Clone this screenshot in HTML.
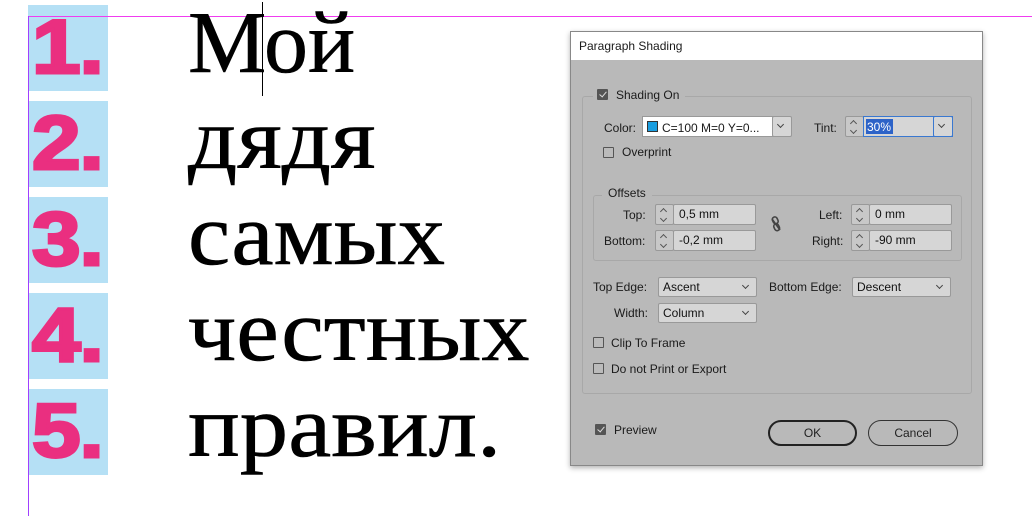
<!DOCTYPE html>
<html><head><meta charset="utf-8"><style>
*{margin:0;padding:0;box-sizing:border-box}
body{width:1032px;height:516px;background:#fff;position:relative;overflow:hidden;font-family:"Liberation Sans",sans-serif}
.a{position:absolute}
.bx{position:absolute;left:28px;width:80px;height:86px;background:#b5e0f5}
.num{position:absolute;left:32px;font:900 76px/1 "Liberation Sans",sans-serif;color:#ea2f80;letter-spacing:-1px;-webkit-text-stroke:3px #ea2f80;transform:scaleX(1.15);transform-origin:0 0}
.w{position:absolute;left:188px;font:88px/1 "Liberation Serif",serif;color:#000;white-space:nowrap;transform-origin:0 0;-webkit-text-stroke:0.6px #000}
.dlg{position:absolute;left:570px;top:31px;width:413px;height:435px;background:#b9b9b9;border:1px solid #888;box-shadow:0 2px 5px rgba(0,0,0,.3)}
.t{position:absolute;font-size:12px;color:#1a1a1a;white-space:nowrap}
.cb{position:absolute;width:11px;height:11px;border:1px solid #555;background:#bbb;border-radius:1px}
.cb.on{background:#555}
.cb.on::after{content:"";position:absolute;left:3px;top:0px;width:3px;height:6px;border:solid #ddd;border-width:0 1.5px 1.5px 0;transform:rotate(40deg)}
.fld{position:absolute;height:21px;background:#d6d6d6;border:1px solid #999;border-radius:2px;font-size:12px;padding:2px 5px;color:#111}
.sp{position:absolute;width:19px;height:21px;border:1px solid #999;background:#c8c8c8;border-radius:2px}
.sp::before{content:"";position:absolute;left:5px;top:4px;width:4px;height:4px;border:solid #555;border-width:1px 0 0 1px;transform:rotate(45deg)}
.sp::after{content:"";position:absolute;left:5px;top:11px;width:4px;height:4px;border:solid #555;border-width:0 1px 1px 0;transform:rotate(45deg)}
.dd{position:absolute;height:20px;background:#d6d6d6;border:1px solid #999;border-radius:2px;font-size:12px;padding:2px 4px;color:#111}
.dd::after{content:"";position:absolute;right:8px;top:5px;width:4px;height:4px;border:solid #444;border-width:0 1px 1px 0;transform:rotate(45deg)}
.grp{position:absolute;border:1px solid #a8a8a8;border-radius:3px}
.btn{position:absolute;height:26px;border-radius:13px;font-size:12px;text-align:center;line-height:22px;color:#222}
</style></head><body>
<div class="bx" style="top:5px"></div><div class="bx" style="top:101px"></div><div class="bx" style="top:197px"></div><div class="bx" style="top:293px"></div><div class="bx" style="top:389px"></div>
<div class="a" style="left:28px;top:16px;width:1004px;height:1px;background:#f03cf0"></div>
<div class="a" style="left:28px;top:16px;width:1px;height:500px;background:#a040ff"></div>
<div class="num" style="top:10px">1.</div>
<div class="num" style="top:106px">2.</div>
<div class="num" style="top:202px">3.</div>
<div class="num" style="top:298px">4.</div>
<div class="num" style="top:394px">5.</div>
<div class="w" style="top:0px">Мой</div>
<div class="w" style="top:96px;transform:scaleX(1.1)">дядя</div>
<div class="w" style="top:192px;transform:scaleX(1.08)">самых</div>
<div class="w" style="top:288px;transform:scaleX(1.09)">честных</div>
<div class="w" style="top:384px;transform:scaleX(1.1)">правил.</div>
<div class="a" style="left:262px;top:2px;width:1px;height:94px;background:#000"></div>

<div class="dlg">
<div class="a" style="left:0;top:0;width:411px;height:28px;background:#fff"></div>
<div class="t" style="left:8px;top:7px">Paragraph Shading</div>
<div class="grp" style="left:11px;top:64px;width:390px;height:298px"></div>
<div class="a" style="left:22px;top:56px;width:92px;height:16px;background:#b9b9b9"></div>
<div class="cb on" style="left:26px;top:57px"></div>
<div class="t" style="left:45px;top:56px">Shading On</div>
<div class="t" style="left:33px;top:89px">Color:</div>
<div class="a" style="left:71px;top:84px;width:133px;height:21px;background:#fff;border:1px solid #999"></div>
<div class="a" style="left:76px;top:89px;width:11px;height:11px;background:#1a9ee0;border:1px solid #333"></div>
<div class="t" style="left:91px;top:89px">C=100 M=0 Y=0...</div>
<div class="dd" style="left:201px;top:84px;width:20px;height:21px"></div>
<div class="t" style="left:243px;top:89px">Tint:</div>
<div class="sp" style="left:274px;top:84px"></div>
<div class="a" style="left:292px;top:84px;width:90px;height:21px;background:#d6d6d6;border:1px solid #3a78d0"></div>
<div class="a" style="left:295px;top:87px;width:27px;height:15px;background:#2d63c8"></div>
<div class="t" style="left:296px;top:88px;color:#fff">30%</div>
<div class="dd" style="left:362px;top:84px;width:20px;height:21px;border-color:#3a78d0"></div>
<div class="cb" style="left:32px;top:115px"></div>
<div class="t" style="left:51px;top:113px">Overprint</div>
<div class="grp" style="left:22px;top:163px;width:369px;height:66px"></div>
<div class="a" style="left:31px;top:155px;width:50px;height:14px;background:#b9b9b9"></div>
<div class="t" style="left:37px;top:154px">Offsets</div>
<div class="t" style="left:52px;top:176px">Top:</div>
<div class="sp" style="left:84px;top:172px"></div>
<div class="fld" style="left:102px;top:172px;width:83px">0,5 mm</div>
<div class="t" style="left:33px;top:202px">Bottom:</div>
<div class="sp" style="left:84px;top:198px"></div>
<div class="fld" style="left:102px;top:198px;width:83px">-0,2 mm</div>
<svg class="a" style="left:198px;top:184px" width="14" height="16" viewBox="0 0 14 16"><g fill="none" stroke="#444" stroke-width="1.6"><rect x="4" y="1" width="5" height="7" rx="2.5" transform="rotate(-25 6 5)"/><rect x="5" y="8" width="5" height="7" rx="2.5" transform="rotate(-25 7 11)"/><line x1="3" y1="3" x2="11" y2="14"/></g></svg>
<div class="t" style="left:248px;top:176px">Left:</div>
<div class="sp" style="left:280px;top:172px"></div>
<div class="fld" style="left:298px;top:172px;width:83px">0 mm</div>
<div class="t" style="left:241px;top:202px">Right:</div>
<div class="sp" style="left:280px;top:198px"></div>
<div class="fld" style="left:298px;top:198px;width:83px">-90 mm</div>
<div class="t" style="left:22px;top:248px">Top Edge:</div>
<div class="dd" style="left:87px;top:245px;width:99px">Ascent</div>
<div class="t" style="left:198px;top:248px">Bottom Edge:</div>
<div class="dd" style="left:281px;top:245px;width:99px">Descent</div>
<div class="t" style="left:43px;top:274px">Width:</div>
<div class="dd" style="left:87px;top:271px;width:99px">Column</div>
<div class="cb" style="left:22px;top:305px"></div>
<div class="t" style="left:40px;top:304px">Clip To Frame</div>
<div class="cb" style="left:22px;top:331px"></div>
<div class="t" style="left:40px;top:330px">Do not Print or Export</div>
<div class="cb on" style="left:24px;top:392px"></div>
<div class="t" style="left:43px;top:391px">Preview</div>
<div class="btn" style="left:197px;top:388px;width:89px;border:2px solid #222">OK</div>
<div class="btn" style="left:297px;top:388px;width:90px;border:1px solid #333;line-height:24px">Cancel</div>
</div>
</body></html>
